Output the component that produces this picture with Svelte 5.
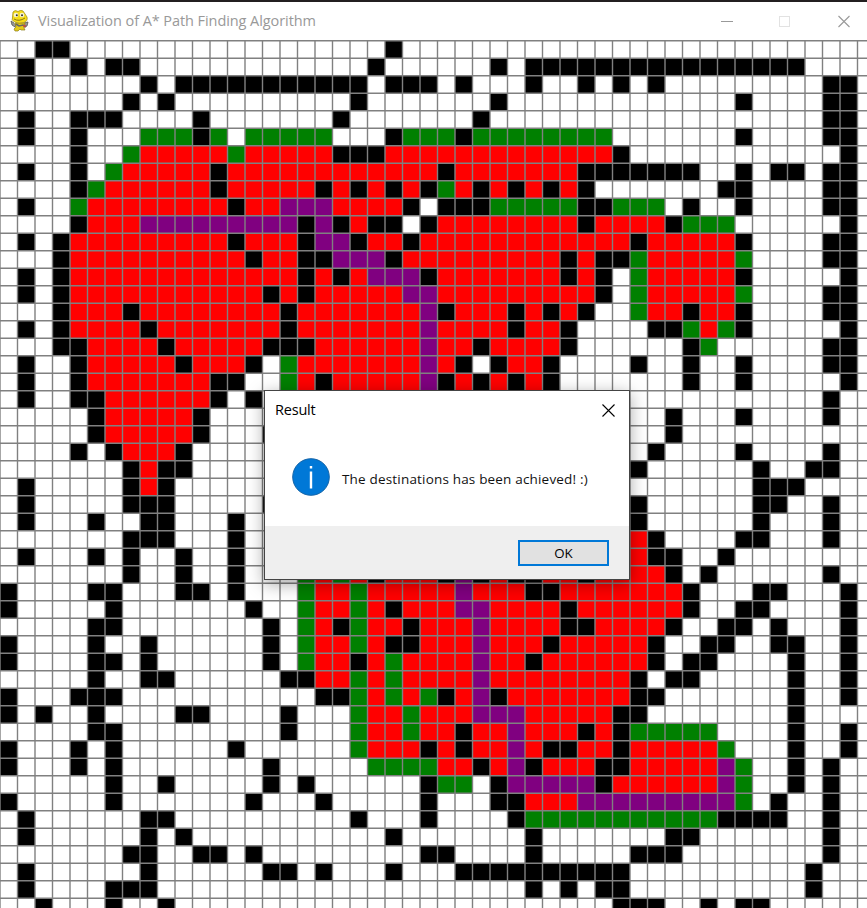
<script>
  const board = [
    '..##..................#...........................',
    '.#..#.##.............#......#.################....',
    '.#......#.###########.###.#...#..#.#.#.........##.',
    '.......#.#..........#.......#.............#....##.',
    '.#..###....#.......#.......#...................##.',
    '.#..#...ggg#g.ggggg...#ggg#gggggggg.......#....##.',
    '....#..grrrrrgrrrrr###rrrrrrrrrrrrr#............#.',
    '.#..#.grrrrr#rrrrrrrrrrrr#rrrrrrr#######..#.##.##.',
    '....#grrrrrr#rrrrr#r#r#r#gr#r#r#r#.......##....##.',
    '.#..grrrrrrrr#rrppprrrr#.###ggggg##ggg.#..#....##.',
    '....#rrrppppppppp#p#r##.#rrrrrrrr#rrrr#ggg......#.',
    '.#.#rrrrrrrrr#rrr#pp#rr#rrrrrrrrrrrr#rrrrr#....##.',
    '...#rrrrrrrrrr#rr##ppp#rrrrrrrrr#r##grrrrrg....##.',
    '.#.#rrrrrrrrrrrrr#r#rppp#rrrrrrr#r#.grrrrr#.....#.',
    '.#.#rrrrrrrrrrr#r#rrrrrpprrrrrrrrr#.grrrrrg....##.',
    '...#rrr#rrrrrrrr#rrrrrrrp#rrr#r#r#..grr#rr#....##.',
    '.#.#rrrr#rrrrrrr#rrrrrrrprrrr#rr#....##grg#.....#.',
    '...##rrrr#rrrrr###rrrrrrprr#rrrr#......#g......##.',
    '.#..#rrrrr#rrr#.grrrrrrrpr#.#rr#....#..#..#....##.',
    '.#..#rrrrrrr##..gr#rrrrrp#r#r#r#.......#..#.....#.',
    '.#..##rrrrrr#.#................................#..',
    '.....#rrrrr#..........................#...#....#..',
    '.....#rrrrr#...#......................#...........',
    '....#.#rrr#..........................#....#....#..',
    '.......#r##.........................#......#..##..',
    '.#.....#r#.................................###....',
    '.#.....###.....#....................#......##..#..',
    '.#...#..##...#......................#......#...#..',
    '.......###...#......................r#....##...#..',
    '.#...#.#..#..#......................r##..#........',
    '.......#..#..#...grgr#rrr#p#r##rr#rrrr#.#......#..',
    '#....##...##.#...grrgrrrrrprrr##rrrrrrr#...##...#.',
    '#.....#.......#..grrgr#rrrpprrrr#rrrrrr#..##....#.',
    '.....##........#.gr#grr#rrrprrrr##rrrr#..##.#...#.',
    '#....#..#......#.grrgr##rrrprrr#rrrrr#..##..##..#.',
    '#....##.#......#.grr#rgrrrrprr#rrrrrr#.##....#..#.',
    '.....#..##......##rrgrgrrrrprrrrrrrr#.##.....#..#.',
    '#...###...........##grgrg#rp#rrrrrrr##.......#..#.',
    '#.#..#....##....#...grrgrrrppprrrrr##........#....',
    '.....##.........#...grrgrr#rrprrr#r#ggggg....#..#.',
    '#...#.#......#......grrr#r#rrpr##rr#rrrrrg...#..#.',
    '#...#.#........#.....ggggrr#rp#rrr##rrrrrpg..#.#..',
    '......#..#.....#.#......#gg.#ppppp#rrrrrrpg..#.#..',
    '#.....#.......#...#.....#...##rrrpppppppppg.#..#..',
    '.#......##..........#...#....#ggggggggggg####..#..',
    '.#......#.#...........#.......#.......##.......#..',
    '.......##..##.#.........##....#.....###........#..',
    '.#......#......##.#...#...##########..........#...',
    '.#....###.....................#.#.##..........#...',
    '..#...#..#.........................###..#.##......'
  ];
  const size = 17.5;
  const kinds = { '#': 'wall', r: 'closed', g: 'open', p: 'path' };
  const cells = [];
  board.forEach((row, y) => {
    let x = 0;
    while (x < row.length) {
      let end = x + 1;
      while (end < row.length && row[end] === row[x]) end++;
      if (row[x] !== '.') cells.push({ x, y, n: end - x, kind: kinds[row[x]] });
      x = end;
    }
  });
  const lines = Array.from({ length: 50 }, (_, i) => i * size);
</script>

<div class="window">
  <header class="titlebar">
    <svg class="logo" width="20" height="22" viewBox="0 0 20 22">
      <path d="M4 13 1 11l1 4 3 2 1-3M14 13l4-1-1 4-3 1" fill="#999" stroke="#555" stroke-width=".8" />
      <path d="M5 13h10l-1 5 1 2h-4l-1-1-2 2H5l-1-2 2-2Z" fill="#e5cc18" stroke="#8a7c20" stroke-width=".7" />
      <path d="M3 2Q5-.5 8 1.500Q11-.5 13 1l2 3 2 3q1 4-3 5.500Q9 14 4.500 12 1 10 2.500 7Z" fill="#f5dc19" stroke="#a59321" stroke-width=".8" />
      <circle cx="6" cy="5" r="2.300" fill="#f7f3d5" /><circle cx="12" cy="5" r="2.300" fill="#f7f3d5" />
      <circle cx="6.800" cy="5.300" r="1" fill="#333" /><circle cx="12" cy="5.300" r="1" fill="#333" />
      <path d="M4 9q5 3 11-1" fill="none" stroke="#8b7715" />
      <path d="m6 14 3 2 4-1 3 2" fill="none" stroke="#666" stroke-width="1.600" />
      <circle cx="14.500" cy="16" r="1.300" fill="#c64b40" />
    </svg>
    <span class="title">Visualization of A* Path Finding Algorithm</span>
    <svg class="controls" width="146" height="36" viewBox="0 0 146 36">
      <path d="M0 18.500h12" stroke="#999" />
      <rect x="58.500" y="13.500" width="10" height="10" fill="none" stroke="#e2e2e2" />
      <path d="m117.500 13 11 11m0-11-11 11" fill="none" stroke="#999" stroke-width="1.100" />
    </svg>
  </header>
  <main>
    <svg class="board" width="867" height="868" viewBox="0 0 867 868">
      {#each cells as c}
        <rect class={c.kind} x={c.x * size} y={c.y * size + 0.5} width={c.n * size} height={size} />
      {/each}
      {#each lines as p}
        <path class="line" d="M{p} 0V868M0 {p + 0.7}H867" />
      {/each}
    </svg>
    <section class="dialog">
      <div class="dialog-head">
        <span class="result">Result</span>
        <svg width="13" height="13" viewBox="0 0 13 13"><path d="m.5.5 12 12m0-12-12 12" stroke="#000" stroke-width="1.100" /></svg>
      </div>
      <div class="dialog-body">
        <svg width="38" height="38" viewBox="0 0 38 38">
          <circle cx="19" cy="19" r="18.300" fill="#0078d7" stroke="#1464a8" />
          <path d="M19 13.500V30.500M19 8v2.500" stroke="#fff" stroke-width="2.400" />
        </svg>
        <span class="message">The destinations has been achieved! :)</span>
      </div>
      <div class="dialog-foot"><button>OK</button></div>
    </section>
  </main>
</div>

<style>
  .window {
    width: 867px;
    height: 908px;
    overflow: hidden;
    background: #fff;
    border-top: 2px solid #231f20;
    box-sizing: border-box;
    font-family: 'Open Sans', 'Noto Sans', sans-serif;
  }
  .titlebar {
    display: flex;
    align-items: center;
    height: 38px;
    padding-left: 10px;
    box-sizing: border-box;
  }
  .logo { flex: none; }
  .title {
    margin-left: 8px;
    padding-bottom: 2px;
    font-size: 14.500px;
    letter-spacing: -0.075px;
    color: #999;
    white-space: nowrap;
  }
  .controls { margin-left: auto; }
  main { position: relative; height: 868px; }
  .board { display: block; }
  .wall { fill: #000; }
  .closed { fill: #f00; }
  .open { fill: #008000; }
  .path { fill: #800080; }
  .line { stroke: #808080; stroke-width: 1.400; fill: none; }
  .dialog {
    position: absolute;
    left: 264px;
    top: 350px;
    width: 366px;
    height: 190px;
    box-sizing: border-box;
    display: flex;
    flex-direction: column;
    background: #fff;
    border: 1px solid #444;
    box-shadow: 0 4px 16px rgba(0, 0, 0, 0.35);
  }
  .dialog-head {
    display: flex;
    align-items: center;
    justify-content: space-between;
    height: 38px;
    padding: 0 14px 0 10px;
  }
  .result {
    padding-bottom: 2px;
    font-size: 14.500px;
    letter-spacing: -0.200px;
    color: #000;
  }
  .dialog-body {
    display: flex;
    align-items: center;
    flex: 1;
    padding: 0 0 1px 27px;
  }
  .message {
    margin-left: 12px;
    padding-top: 3px;
    font-size: 13.500px;
    letter-spacing: 0.180px;
    color: #111;
    white-space: nowrap;
  }
  .dialog-foot {
    display: flex;
    align-items: center;
    justify-content: flex-end;
    height: 53px;
    padding-right: 20px;
    background: #efefef;
  }
  button {
    width: 91px;
    height: 26px;
    padding: 0;
    background: #e1e1e1;
    border: 2px solid #0078d7;
    font: 13.300px 'Open Sans', 'Noto Sans', sans-serif;
    color: #000;
  }
</style>
